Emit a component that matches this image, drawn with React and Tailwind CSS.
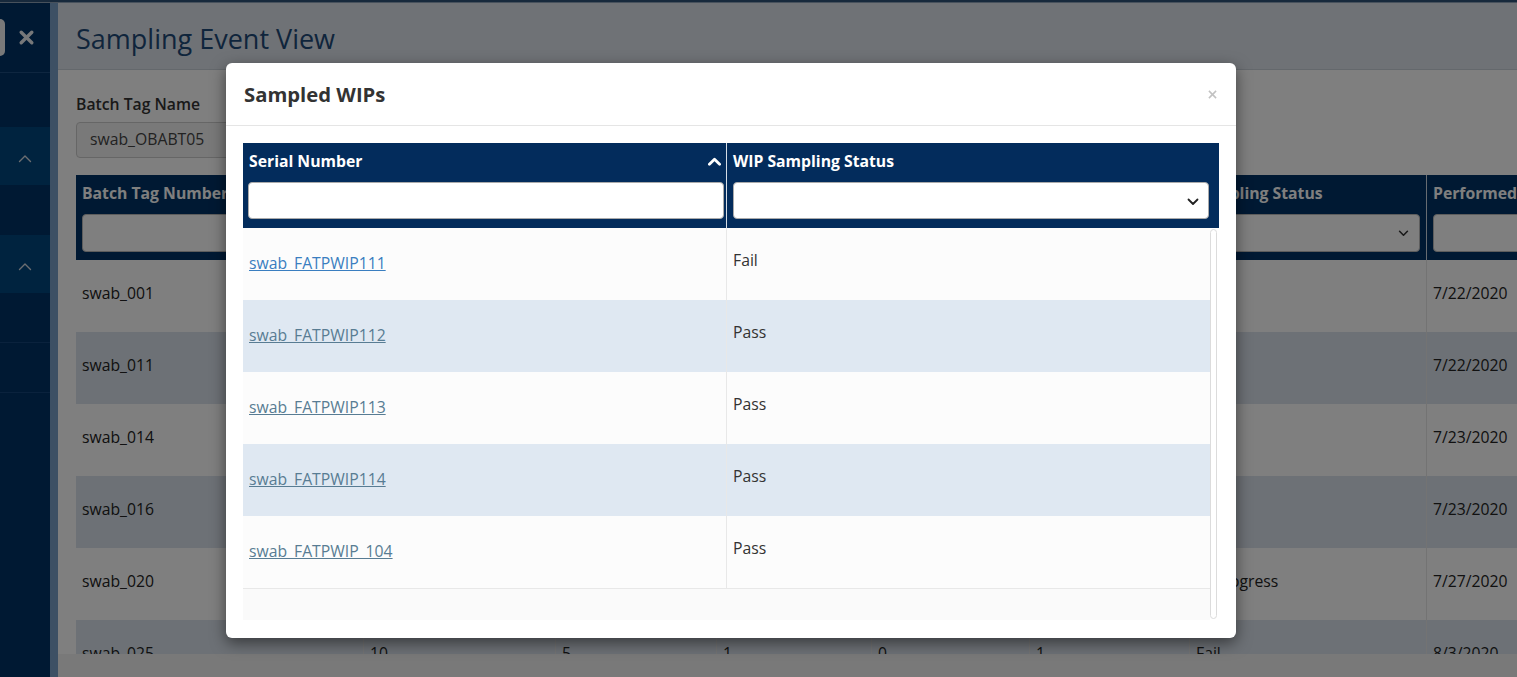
import { useState } from 'react';

const bgColumns = [
  { label: 'Batch Tag Number', width: 'w-[288px]', filter: 'input' },
  { label: 'Total WIPs', width: 'w-[192px]', filter: 'input' },
  { label: 'Sampled WIPs', width: 'w-[161px]', filter: 'input' },
  { label: 'Passed', width: 'w-[155px]', filter: 'input' },
  { label: 'Failed', width: 'w-[158px]', filter: 'input' },
  { label: 'Pending', width: 'w-[160px]', filter: 'input' },
  { label: 'Sampling Status', width: 'w-[237px]', filter: 'select' },
  { label: 'Performed Date', width: 'w-[200px]', filter: 'input' },
];

const bgRows = [
  ['swab_001', '10', '5', '5', '0', '0', 'Pass', '7/22/2020'],
  ['swab_011', '10', '5', '5', '0', '0', 'Pass', '7/22/2020'],
  ['swab_014', '10', '5', '5', '0', '0', 'Pass', '7/23/2020'],
  ['swab_016', '10', '5', '5', '0', '0', 'Pass', '7/23/2020'],
  ['swab_020', '10', '5', '3', '0', '2', 'In Progress', '7/27/2020'],
  ['swab_025', '10', '5', '1', '0', '1', 'Fail', '8/3/2020'],
];

const wips = [
  { serial: 'swab_FATPWIP111', status: 'Fail', active: true },
  { serial: 'swab_FATPWIP112', status: 'Pass' },
  { serial: 'swab_FATPWIP113', status: 'Pass' },
  { serial: 'swab_FATPWIP114', status: 'Pass' },
  { serial: 'swab_FATPWIP_104', status: 'Pass' },
];

const ChevronDown = ({ className }) => (
  <svg viewBox="0 0 12 8" className={className} fill="none" stroke="currentColor" strokeWidth="1.8" strokeLinecap="round" strokeLinejoin="round">
    <polyline points="1.5,1.5 6,6 10.5,1.5" />
  </svg>
);

const ChevronUp = ({ className, width = '1.4' }) => (
  <svg viewBox="0 0 14 9" className={className} fill="none" stroke="currentColor" strokeWidth={width} strokeLinecap="round" strokeLinejoin="round">
    <polyline points="1.5,7.5 7,2 12.5,7.5" />
  </svg>
);

const Sidebar = () => (
  <aside className="w-[50px] shrink-0 bg-[#003366] flex flex-col">
    <div className="h-[70px] border-b border-[#1c4d80] flex items-center">
      <div className="w-[5px] h-[37px] bg-[#f2f2f2] rounded-r-[5px]"></div>
      <svg viewBox="0 0 16 16" className="ml-[13px] w-[17px] h-[17px] text-[#eef1f4]" fill="none" stroke="currentColor" strokeWidth="3.2" strokeLinecap="round">
        <line x1="3" y1="3" x2="13" y2="13" />
        <line x1="13" y1="3" x2="3" y2="13" />
      </svg>
    </div>
    <div className="h-[54px]"></div>
    <div className="h-[58px] bg-[#00467f] flex items-center justify-center pt-[5px]">
      <ChevronUp className="w-[14px] h-[9px] text-[#d8dde3]" />
    </div>
    <div className="h-[50px]"></div>
    <div className="h-[58px] bg-[#00467f] flex items-center justify-center pt-[5px]">
      <ChevronUp className="w-[14px] h-[9px] text-[#d8dde3]" />
    </div>
    <div className="h-[50px] border-b border-[#14457a]"></div>
    <div className="h-[50px] border-b border-[#14457a]"></div>
  </aside>
);

const BackgroundPage = () => (
  <div className="flex flex-col h-full font-['Open_Sans',sans-serif] text-[#222]">
    <div className="h-[3px] bg-[#2f5378] border-b border-[#8fa3b8]"></div>
    <div className="flex flex-1 min-h-0">
      <Sidebar />
      <div className="w-[8px] shrink-0 bg-[#7ba1c9]"></div>
      <main className="flex-1 min-w-0 flex flex-col">
        <div className="h-[67px] shrink-0 bg-[#dfe5ec] border-b border-[#c9d0d8] flex items-center pl-[18px] pt-[5px]">
          <h1 className="text-[27px] text-[#1f4a78] leading-none">Sampling Event View</h1>
        </div>
        <div className="flex-1 min-h-0 bg-white pl-[18px] pt-[24px] overflow-hidden flex flex-col">
          <label className="text-[15.75px] font-semibold leading-[20px] text-[#333]">Batch Tag Name</label>
          <div className="mt-[8px] w-[320px] h-[36px] rounded-[4px] border border-[#cccccc] bg-[#f3f3f3] flex items-center px-[13px] text-[15.75px] text-[#444]">
            swab_OBABT05
          </div>
          <div className="mt-[17px] flex-1 min-h-0 overflow-hidden">
            <div className="flex w-max bg-[#003366]">
              {bgColumns.map((col, i) => (
                <div key={i} className={`${col.width} shrink-0 h-[85px] pt-[8px] px-[6px] border-r border-[#cfd8e2] flex flex-col`}>
                  <div className="text-[15.75px] font-bold leading-[20px] text-white whitespace-nowrap">{col.label}</div>
                  <div className="mt-[11px] h-[38px] rounded-[4px] bg-white border border-[#bbb] flex items-center justify-end pr-[10px]">
                    {col.filter === 'select' && <ChevronDown className="w-[11px] h-[7px] text-[#333]" />}
                  </div>
                </div>
              ))}
            </div>
            {bgRows.map((row, r) => (
              <div key={r} className={`flex w-max h-[72px] ${r % 2 === 1 ? 'bg-[#dae3ec]' : 'bg-white'}`}>
                {row.map((cell, c) => (
                  <div key={c} className={`${bgColumns[c].width} shrink-0 px-[6px] pb-[5px] border-r border-[#e6e6e6] flex items-center text-[15.75px] whitespace-nowrap`}>
                    {cell}
                  </div>
                ))}
              </div>
            ))}
          </div>
        </div>
        <div className="h-[23px] shrink-0 bg-[#f3f3f3]"></div>
      </main>
    </div>
  </div>
);

const SampledWipsModal = () => {
  const [serialFilter, setSerialFilter] = useState('');
  const [statusFilter, setStatusFilter] = useState('');

  const rows = wips.filter(
    (w) =>
      w.serial.toLowerCase().includes(serialFilter.toLowerCase()) &&
      (statusFilter === '' || w.status === statusFilter)
  );

  return (
    <div className="w-[1010px] bg-white rounded-[6px] shadow-[0_5px_15px_rgba(0,0,0,0.5)] font-['Open_Sans',sans-serif]">
      <div className="h-[63px] border-b border-[#e5e5e5] flex items-center justify-between pl-[18px] pr-[19px]">
        <h2 className="text-[20.25px] font-bold text-[#333] leading-none">Sampled WIPs</h2>
        <button className="text-[#c2c2c2]">
          <svg viewBox="0 0 10 10" className="w-[9px] h-[9px]" fill="none" stroke="currentColor" strokeWidth="1.7">
            <line x1="1" y1="1" x2="9" y2="9" />
            <line x1="9" y1="1" x2="1" y2="9" />
          </svg>
        </button>
      </div>
      <div className="pt-[17px] pb-[18px] px-[17px]">
        <div className="flex h-[85px] bg-[#032c5c]">
          <div className="w-[484px] shrink-0 pt-[8px] pl-[5px] pr-[2px] flex flex-col border-r border-[#d5dde6]">
            <div className="flex items-center justify-between pl-[1px] pr-[3px]">
              <span className="text-[15.75px] font-bold leading-[20px] text-white">Serial Number</span>
              <ChevronUp className="w-[13px] h-[9px] text-white" width="3" />
            </div>
            <input
              className="mt-[11px] h-[37px] w-full rounded-[4px] bg-white border border-[#aaa] px-[8px] text-[15.75px] outline-none"
              value={serialFilter}
              onChange={(e) => setSerialFilter(e.target.value)}
            />
          </div>
          <div className="flex-1 pt-[8px] pl-[6px] pr-[10px] flex flex-col">
            <span className="text-[15.75px] font-bold leading-[20px] text-white">WIP Sampling Status</span>
            <div className="relative mt-[11px] h-[37px]">
              <select
                className="appearance-none h-full w-full rounded-[4px] bg-white border border-[#aaa] px-[8px] text-[15.75px] outline-none"
                value={statusFilter}
                onChange={(e) => setStatusFilter(e.target.value)}
              >
                <option value=""></option>
                <option value="Pass">Pass</option>
                <option value="Fail">Fail</option>
              </select>
              <ChevronDown className="absolute right-[10px] top-[16px] w-[12px] h-[8px] text-[#222] pointer-events-none" />
            </div>
          </div>
        </div>
        <div className="flex h-[392px] bg-[#fafafa]">
          <div className="flex-1 flex flex-col">
            {rows.map((w, i) => (
              <div key={w.serial} className={`flex h-[72px] ${i % 2 === 1 ? 'bg-[#dfe8f2]' : 'bg-[#fcfcfc]'}`}>
                <div className="w-[484px] shrink-0 pl-[6px] flex items-center border-r border-[#e8e8e8]">
                  <a href="#" className={`text-[15.75px] underline ${w.active ? 'text-[#3a7ec0]' : 'text-[#587c93]'}`}>
                    {w.serial}
                  </a>
                </div>
                <div className="flex-1 pl-[6px] pt-[22px] text-[15.75px] leading-[20px] text-[#333]">{w.status}</div>
              </div>
            ))}
            <div className="flex-1 border-t border-[#e8e8e8]"></div>
          </div>
          <div className="w-[9px] shrink-0 bg-white flex">
            <div className="w-[7px] my-[1px] rounded-[4px] border border-[#dcdcdc] bg-white"></div>
          </div>
        </div>
      </div>
    </div>
  );
};

export default function App() {
  return (
    <div className="relative w-full h-[677px] overflow-hidden bg-white">
      <BackgroundPage />
      <div className="absolute inset-0 bg-black/50 pt-[63px] pl-[226px]">
        <SampledWipsModal />
      </div>
    </div>
  );
}
